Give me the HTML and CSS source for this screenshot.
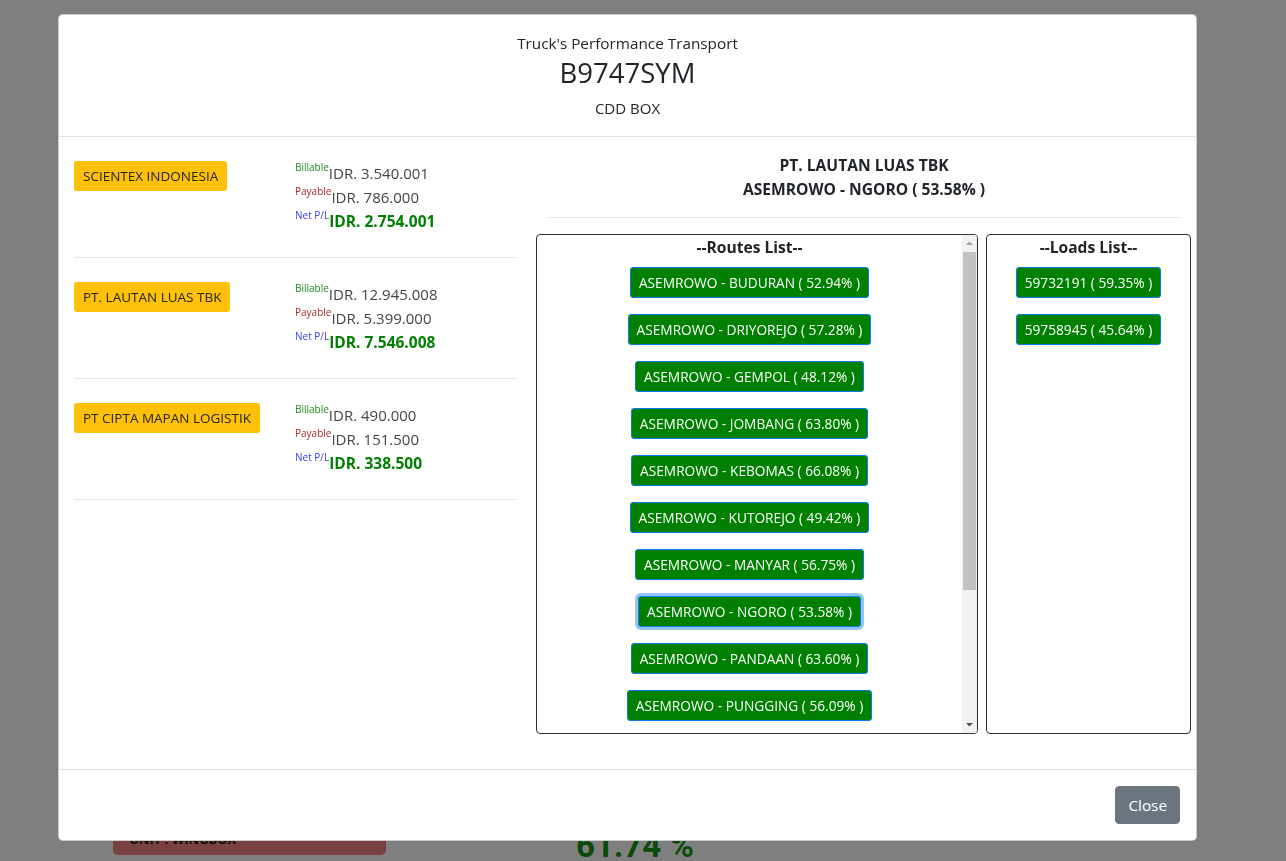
FILE: index.html
```html
<!DOCTYPE html>
<html>
<head>
<meta charset="utf-8">
<link rel="stylesheet" href="styles.css">
</head>
<body>
<div class="page">
  <div class="bg-row">
    <div class="bg-unit">UNIT : WINGBOX</div>
    <div class="bg-pct">61.74 %</div>
  </div>
</div>
<div class="backdrop"></div>
<div class="modal-wrap">
  <div class="modal">
    <div class="modal-header">
      <div class="m-sub">Truck's Performance Transport</div>
      <div class="m-title">B9747SYM</div>
      <div class="m-type">CDD BOX</div>
    </div>
    <div class="modal-body">
      <div class="left-col">
        <div class="entry">
          <div class="entry-name"><span class="badge">SCIENTEX INDONESIA</span></div>
          <div class="entry-vals">
            <div class="line"><sup class="lbl lbl-bill">Billable</sup>IDR. 3.540.001</div>
            <div class="line"><sup class="lbl lbl-pay">Payable</sup>IDR. 786.000</div>
            <div class="line"><sup class="lbl lbl-net">Net P/L</sup><b class="net">IDR. 2.754.001</b></div>
          </div>
        </div>
        <div class="entry">
          <div class="entry-name"><span class="badge">PT. LAUTAN LUAS TBK</span></div>
          <div class="entry-vals">
            <div class="line"><sup class="lbl lbl-bill">Billable</sup>IDR. 12.945.008</div>
            <div class="line"><sup class="lbl lbl-pay">Payable</sup>IDR. 5.399.000</div>
            <div class="line"><sup class="lbl lbl-net">Net P/L</sup><b class="net">IDR. 7.546.008</b></div>
          </div>
        </div>
        <div class="entry">
          <div class="entry-name"><span class="badge">PT CIPTA MAPAN LOGISTIK</span></div>
          <div class="entry-vals">
            <div class="line"><sup class="lbl lbl-bill">Billable</sup>IDR. 490.000</div>
            <div class="line"><sup class="lbl lbl-pay">Payable</sup>IDR. 151.500</div>
            <div class="line"><sup class="lbl lbl-net">Net P/L</sup><b class="net">IDR. 338.500</b></div>
          </div>
        </div>
      </div>
      <div class="right-col">
        <div class="sel-title">PT. LAUTAN LUAS TBK<br>ASEMROWO - NGORO ( 53.58% )</div>
        <div class="hr"></div>
        <div class="lists">
          <div class="list routes">
            <div class="list-content">
              <div class="list-head">--Routes List--</div>
              <button class="gbtn">ASEMROWO - BUDURAN ( 52.94% )</button>
              <button class="gbtn">ASEMROWO - DRIYOREJO ( 57.28% )</button>
              <button class="gbtn">ASEMROWO - GEMPOL ( 48.12% )</button>
              <button class="gbtn">ASEMROWO - JOMBANG ( 63.80% )</button>
              <button class="gbtn">ASEMROWO - KEBOMAS ( 66.08% )</button>
              <button class="gbtn">ASEMROWO - KUTOREJO ( 49.42% )</button>
              <button class="gbtn">ASEMROWO - MANYAR ( 56.75% )</button>
              <button class="gbtn active">ASEMROWO - NGORO ( 53.58% )</button>
              <button class="gbtn">ASEMROWO - PANDAAN ( 63.60% )</button>
              <button class="gbtn">ASEMROWO - PUNGGING ( 56.09% )</button>
              <button class="gbtn">ASEMROWO - SIDOARJO ( 58.10% )</button>
              <button class="gbtn">ASEMROWO - TUBAN ( 60.22% )</button>
            </div>
            <div class="sbar">
              <div class="sb-btn"><svg width="15" height="17" viewBox="0 0 15 17"><path d="M4 10 L7.5 6.5 L11 10 Z" fill="#a3a3a3"/></svg></div>
              <div class="sb-track"><div class="sb-thumb"></div></div>
              <div class="sb-btn"><svg width="15" height="17" viewBox="0 0 15 17"><path d="M4 7 L7.5 10.5 L11 7 Z" fill="#505050"/></svg></div>
            </div>
          </div>
          <div class="list loads">
            <div class="list-content">
              <div class="list-head">--Loads List--</div>
              <button class="gbtn">59732191 ( 59.35% )</button>
              <button class="gbtn">59758945 ( 45.64% )</button>
            </div>
          </div>
        </div>
      </div>
    </div>
    <div class="modal-footer">
      <button class="close-btn">Close</button>
    </div>
  </div>
</div>
</body>
</html>
```
FILE: styles.css
```css
* { box-sizing: border-box; }
html, body { margin: 0; padding: 0; }
body {
  font-family: "Open Sans", "Noto Sans", sans-serif;
  color: #212529;
  background: #fff;
  width: 1286px;
  height: 861px;
  overflow: hidden;
}
.page { padding-top: 815px; }
.bg-row { display: flex; align-items: flex-start; }
.bg-unit {
  margin-left: 113px;
  width: 273px;
  height: 40px;
  background: #f08080;
  border-radius: 5px;
  padding: 15px 16px 0;
  font-weight: 700;
  font-size: 13px;
  color: #222;
}
.bg-pct {
  margin-left: 190px;
  font-family: "Roboto", sans-serif;
  font-weight: 700;
  font-size: 33px;
  line-height: 40px;
  padding-top: 11px;
  color: #149414;
}
.backdrop {
  position: fixed;
  inset: 0;
  background: rgba(0,0,0,0.5);
}
.modal-wrap {
  position: fixed;
  inset: 0;
  padding: 14px 0 0 58px;
}
.modal {
  width: 1139px;
  background: #fff;
  border: 1px solid rgba(0,0,0,0.2);
  border-radius: 5px;
  display: flex;
  flex-direction: column;
}
.modal-header {
  border-bottom: 1px solid #dee2e6;
  text-align: center;
  padding: 15px 16px 17px;
  height: 122px;
}
.m-sub { font-size: 15.3px; line-height: 26px; color: #212529; }
.m-title { font-size: 27.5px; line-height: 34px; font-weight: 400; color: #212529; }
.m-type { font-size: 15px; line-height: 20px; margin-top: 8px; color: #212529; }

.modal-body {
  display: flex;
  gap: 30px;
  padding: 0 15px 35px;
}
.left-col { width: 443px; flex: none; }
.entry {
  display: flex;
  padding: 24px 0;
  border-bottom: 1px solid #e5e5e5;
}
.entry-name { width: 221px; flex: none; }
.badge {
  display: inline-block;
  background: #ffc107;
  color: #212529;
  font-size: 13.5px;
  line-height: 20px;
  padding: 5px 9px;
  border-radius: 3px;
}
.entry-vals { font-size: 15px; color: #444; }
.line { line-height: 24px; height: 24px; white-space: nowrap; }
.lbl { font-size: 10px; vertical-align: 8px; line-height: 0; }
.lbl-bill { color: #1a8a1a; }
.lbl-pay { color: #a52a2a; }
.lbl-net { color: #3b3bff; }
.net { color: #008000; font-weight: 700; font-size: 15.5px; }

.right-col { width: 634px; flex: none; padding-top: 16px; }
.sel-title {
  text-align: center;
  font-weight: 700;
  font-size: 15.6px;
  line-height: 24px;
  color: #212529;
}
.hr { height: 1px; background: #e5e5e5; margin: 16px 0; }
.lists {
  display: flex;
  gap: 8px;
  margin: 0 -10px 0 -11px;
}
.list {
  height: 500px;
  border: 1px solid #333;
  border-radius: 4px;
  display: flex;
  overflow: hidden;
  flex: none;
}
.routes { width: 442px; }
.loads { width: 205px; }
.list-content {
  flex: 1;
  display: flex;
  flex-direction: column;
  align-items: center;
  overflow: hidden;
}
.list-head {
  font-weight: 700;
  font-size: 15.6px;
  line-height: 24px;
  margin-bottom: 8px;
  color: #212529;
}
.gbtn {
  font-family: inherit;
  flex: none;
  background: #008000;
  color: #fff;
  border: 1px solid #0a7cf0;
  border-radius: 3px;
  font-size: 13.7px;
  line-height: 21px;
  padding: 4px 8px;
  margin-bottom: 16px;
  white-space: nowrap;
}
.gbtn.active { box-shadow: 0 0 0 3px #93c5f8; }
.sbar {
  width: 15px;
  flex: none;
  background: #f1f1f1;
  display: flex;
  flex-direction: column;
}
.sb-btn { height: 17px; flex: none; }
.sb-btn svg { display: block; }
.sb-track { flex: 1; padding: 0 1px; }
.sb-thumb { height: 338px; background: #c1c1c1; }

.modal-footer {
  border-top: 1px solid #dee2e6;
  padding: 16px 16px 16px 15px;
  display: flex;
  justify-content: flex-end;
}
.close-btn {
  font-family: inherit;
  background: #6c757d;
  color: #fff;
  border: 1px solid #6c757d;
  border-radius: 4px;
  font-size: 15.3px;
  line-height: 24px;
  padding: 6px 12px;
  height: 38px;
}
```
